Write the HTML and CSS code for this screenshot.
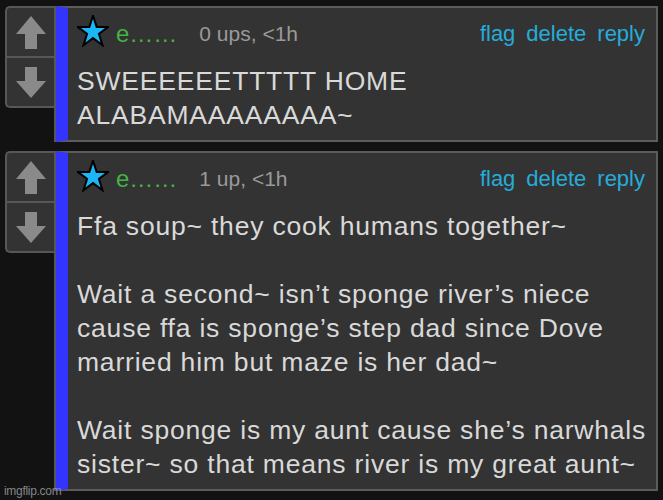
FILE: index.html
```html
<!DOCTYPE html>
<html>
<head>
<meta charset="utf-8">
<link rel="stylesheet" href="styles.css">
</head>
<body>
<div class="thread">
  <div class="comment">
    <div class="votes">
      <div class="vote"><svg width="30" height="33" viewBox="0 0 30 33"><path d="M15 0 L30 18 L21 18 L21 33 L9 33 L9 18 L0 18 Z" fill="#8a8a8a"/></svg></div>
      <div class="vote"><svg width="30" height="31" viewBox="0 0 30 31"><path d="M9 0 L21 0 L21 14 L30 14 L15 31 L0 14 L9 14 Z" fill="#8a8a8a"/></svg></div>
    </div>
    <div class="box">
      <div class="content">
        <div class="head">
          <svg class="star" width="32" height="32" viewBox="0 0 32 32"><path d="M16 0.8 L19.66 11.9 L31.3 11.9 L21.92 18.8 L25.5 30.2 L16 23.1 L6.5 30.2 L10.08 18.8 L0.7 11.9 L12.34 11.9 Z" fill="#1ab6f6" stroke="#000" stroke-width="2" stroke-linejoin="miter"/></svg>
          <span class="user">e……</span>
          <span class="meta">0 ups, &lt;1h</span>
          <span class="links"><a href="#">flag</a><a href="#">delete</a><a href="#">reply</a></span>
        </div>
        <div class="text">SWEEEEEETTTTT HOME<br>ALABAMAAAAAAAA~</div>
      </div>
    </div>
  </div>
  <div class="comment">
    <div class="votes">
      <div class="vote"><svg width="30" height="33" viewBox="0 0 30 33"><path d="M15 0 L30 18 L21 18 L21 33 L9 33 L9 18 L0 18 Z" fill="#8a8a8a"/></svg></div>
      <div class="vote"><svg width="30" height="31" viewBox="0 0 30 31"><path d="M9 0 L21 0 L21 14 L30 14 L15 31 L0 14 L9 14 Z" fill="#8a8a8a"/></svg></div>
    </div>
    <div class="box">
      <div class="content">
        <div class="head">
          <svg class="star" width="32" height="32" viewBox="0 0 32 32"><path d="M16 0.8 L19.66 11.9 L31.3 11.9 L21.92 18.8 L25.5 30.2 L16 23.1 L6.5 30.2 L10.08 18.8 L0.7 11.9 L12.34 11.9 Z" fill="#1ab6f6" stroke="#000" stroke-width="2" stroke-linejoin="miter"/></svg>
          <span class="user">e……</span>
          <span class="meta">1 up, &lt;1h</span>
          <span class="links"><a href="#">flag</a><a href="#">delete</a><a href="#">reply</a></span>
        </div>
        <div class="text">Ffa soup~ they cook humans together~<br><br>Wait a second~ isn’t sponge river’s niece<br>cause ffa is sponge’s step dad since Dove<br>married him but maze is her dad~<br><br>Wait sponge is my aunt cause she’s narwhals<br>sister~ so that means river is my great aunt~</div>
      </div>
    </div>
  </div>
</div>
<div class="watermark">imgflip.com</div>
</body>
</html>
```
FILE: styles.css
```css
html, body {
  margin: 0;
  background: #121212;
}
body {
  padding: 6px 5px 0 5px;
  height: 500px;
  box-sizing: border-box;
  font-family: "Liberation Sans", Arial, sans-serif;
  position: relative;
  overflow: hidden;
}
.thread {
  display: flex;
  flex-direction: column;
  gap: 9px;
}
.comment {
  display: flex;
  align-items: flex-start;
}
.votes {
  width: 51px;
  height: 102px;
  box-sizing: border-box;
  border: 2px solid #575757;
  border-right: none;
  border-radius: 5px 0 0 5px;
  background: #333;
  display: flex;
  flex-direction: column;
  flex: none;
}
.vote {
  flex: 1;
  display: flex;
  align-items: center;
  justify-content: center;
  padding-right: 1px;
}
.vote + .vote {
  border-top: 2px solid #575757;
}
.box {
  flex: 1;
  background: #333;
  border: 2px solid #5c5c5c;
  border-left: 12px solid #3434ff;
  box-shadow: -2px 0 0 #575757;
  min-width: 0;
}
.content {
  padding: 7px 11px 8px 9px;
}
.head {
  display: flex;
  align-items: center;
  height: 32px;
}
.star {
  flex: none;
}
.user {
  color: #45b345;
  font-size: 24px;
  margin-left: 7px;
  margin-top: 5px;
}
.meta {
  color: #9a9a9a;
  font-size: 21px;
  margin-left: 22px;
  margin-top: 6px;
}
.links {
  margin-left: auto;
  margin-top: 6px;
  display: flex;
  gap: 11px;
}
.links a {
  color: #25acd9;
  text-decoration: none;
  font-size: 22px;
}
.text {
  margin-top: 17px;
  color: #d9d9d9;
  font-size: 26.5px;
  line-height: 34px;
  letter-spacing: 0.8px;
  white-space: nowrap;
}
.watermark {
  position: absolute;
  left: 4px;
  bottom: 2px;
  color: #9a9a9a;
  font-size: 12px;
  font-family: "Liberation Sans", Arial, sans-serif;
  letter-spacing: -0.3px;
  opacity: 0.85;
}
```
